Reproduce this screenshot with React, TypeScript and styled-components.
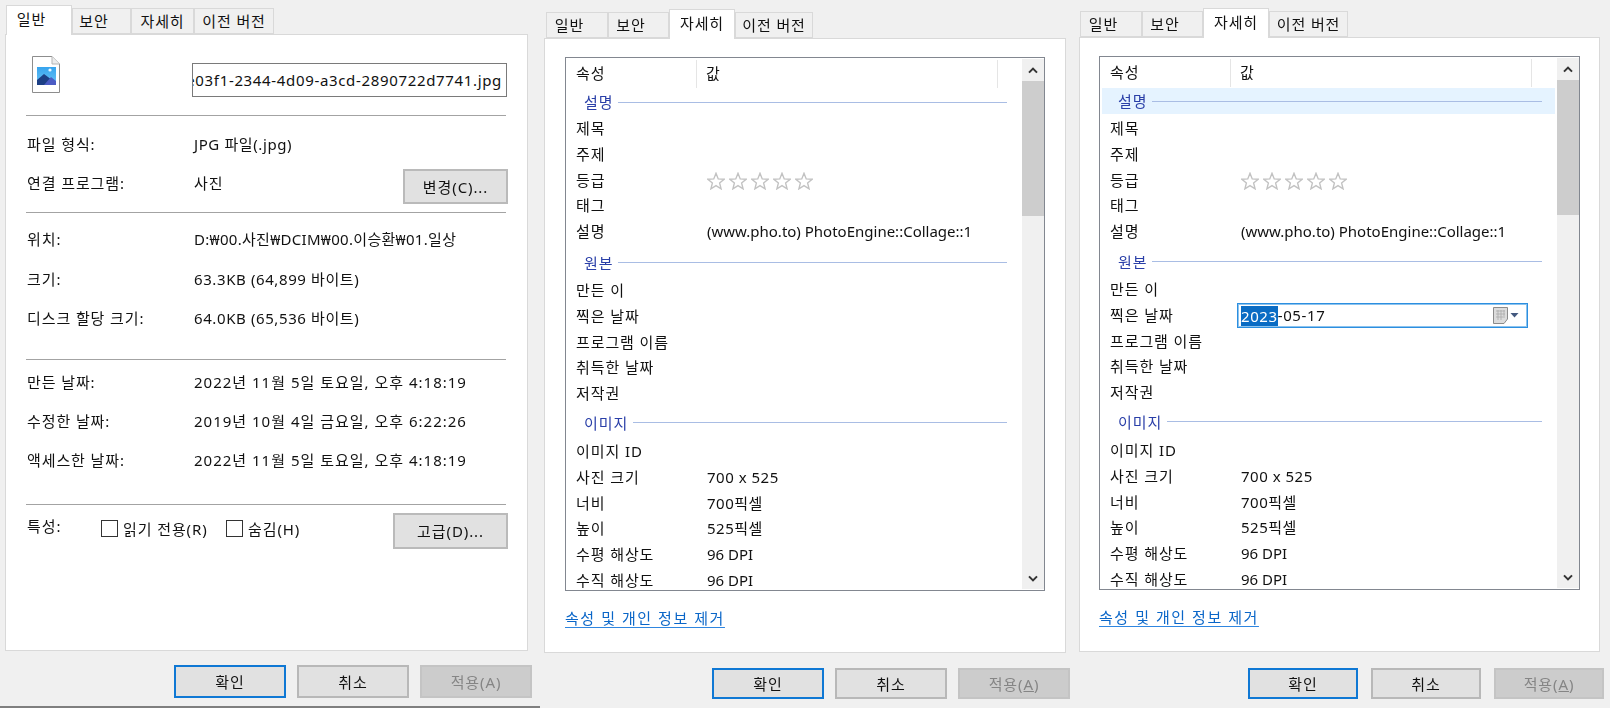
import React from "react";
import styled, { createGlobalStyle } from "styled-components";

const Global = createGlobalStyle`
  html, body { margin: 0; padding: 0; background: #f0f0f0; }
  body { width: 1610px; height: 708px; overflow: hidden; font-family: "Noto Sans", "Noto Sans CJK KR", sans-serif; font-size: 15px; letter-spacing: 0.9px; color: #111; }
  * { box-sizing: border-box; }
`;

const Page = styled.div`
  display: flex;
  width: 1610px;
  height: 708px;
  filter: blur(0.4px);
`;

const Dialog = styled.section<{ $w: number; $pl: number; $pt: number }>`
  width: ${(p) => p.$w}px;
  height: 708px;
  padding: ${(p) => p.$pt}px 0 0 ${(p) => p.$pl}px;
  flex: none;
`;

const TabRow = styled.div<{ $ml: number }>`
  display: flex;
  align-items: flex-end;
  height: 30px;
  margin: 0 0 -1px ${(p) => p.$ml}px;
  position: relative;
  z-index: 1;
`;

const Tab = styled.div<{ $w: number; $active?: boolean; $short?: boolean }>`
  width: ${(p) => p.$w}px;
  height: ${(p) => (p.$active ? 30 : 26)}px;
  margin-bottom: ${(p) => (p.$active ? 0 : 1)}px;
  background: ${(p) => (p.$active ? "#fff" : "#f0f0f0")};
  border: 1px solid #d9d9d9;
  border-bottom: ${(p) => (p.$active ? "none" : "1px solid #d9d9d9")};
  display: flex;
  align-items: center;
  justify-content: center;
  padding-bottom: ${(p) => (p.$active ? 3 : 0)}px;
  padding-right: ${(p) => (p.$short ? 15 : 0)}px;
  line-height: 18px;
  white-space: nowrap;
`;

const Panel = styled.div<{ $w: number; $h: number }>`
  width: ${(p) => p.$w}px;
  height: ${(p) => p.$h}px;
  background: #fff;
  border: 1px solid #d9d9d9;
`;

const GeneralBody = styled(Panel)`
  padding: 20px 19px 0 20px;
`;

const HeadRow = styled.div`
  display: flex;
  height: 42px;
`;

const IconSlot = styled.div`
  width: 166px;
  padding: 1px 0 0 6px;
  flex: none;
`;

const NameInput = styled.div`
  width: 315px;
  height: 34px;
  margin-top: 8px;
  border: 1px solid #7a7a7a;
  background: #fff;
  overflow: hidden;
  display: flex;
  justify-content: flex-end;
  align-items: center;
  padding-right: 4px;
  white-space: nowrap;
  letter-spacing: 0.66px;
`;

const Rule = styled.div<{ $mt: number }>`
  height: 1px;
  width: 480px;
  background: #a3a3a3;
  margin-top: ${(p) => p.$mt}px;
`;

const InfoRow = styled.div<{ $h: number; $mt?: number }>`
  display: flex;
  height: ${(p) => p.$h}px;
  margin-top: ${(p) => p.$mt ?? 0}px;
  line-height: ${(p) => p.$h}px;
`;

const InfoLabel = styled.div`
  width: 168px;
  padding-left: 1px;
  flex: none;
  white-space: nowrap;
`;

const InfoValue = styled.div<{ $ls?: number }>`
  flex: 1;
  white-space: nowrap;
  letter-spacing: ${(p) => p.$ls ?? 0.9}px;
`;

const ActionButton = styled.div<{ $w: number; $h: number }>`
  width: ${(p) => p.$w}px;
  height: ${(p) => p.$h}px;
  flex: none;
  background: #e1e1e1;
  border: 2px solid #bababa;
  display: flex;
  align-items: center;
  justify-content: center;
  line-height: 18px;
`;

const OpenWithRow = styled.div`
  display: flex;
  height: 35px;
  margin-top: 15px;
  line-height: 28px;
`;

const AttrRow = styled.div`
  display: flex;
  height: 36px;
  margin-top: 8px;
`;

const AttrLabel = styled.div`
  width: 75px;
  padding-left: 1px;
  flex: none;
  line-height: 26px;
`;

const Check = styled.span`
  width: 17px;
  height: 17px;
  flex: none;
  border: 1px solid #333;
  background: #fff;
  margin-right: 5px;
`;

const CheckItem = styled.label<{ $w: number }>`
  display: flex;
  align-items: center;
  width: ${(p) => p.$w}px;
  height: 17px;
  margin-top: 7px;
  flex: none;
  white-space: nowrap;
`;

const Footer = styled.div<{ $ml: number; $gap: number; $mt: number }>`
  display: flex;
  gap: ${(p) => p.$gap}px;
  margin: ${(p) => p.$mt}px 0 0 ${(p) => p.$ml}px;
`;

const FooterButton = styled.div<{ $w: number; $h: number; $kind?: "default" | "disabled" }>`
  width: ${(p) => p.$w}px;
  height: ${(p) => p.$h}px;
  display: flex;
  align-items: center;
  justify-content: center;
  line-height: 18px;
  background: ${(p) => (p.$kind === "disabled" ? "#cccccc" : "#e1e1e1")};
  color: ${(p) => (p.$kind === "disabled" ? "#858585" : "#111")};
  border: 2px solid
    ${(p) => (p.$kind === "default" ? "#0f78d4" : p.$kind === "disabled" ? "#c4c4c4" : "#b8b8b8")};
`;

const BottomLine = styled.div`
  width: 540px;
  height: 2px;
  margin: 8px 0 0 -5px;
  background: #7f7f7f;
`;

const DetailBody = styled(Panel)<{ $pl: number }>`
  padding: 18px 0 0 ${(p) => p.$pl}px;
`;

const ListBox = styled.div<{ $h: number; $w: number }>`
  width: ${(p) => p.$w}px;
  height: ${(p) => p.$h}px;
  border: 1px solid #828790;
  display: flex;
  background: #fff;
  overflow: hidden;
`;

const PropList = styled.div`
  flex: 1;
  min-width: 0;
  overflow: hidden;
`;

const HeaderRow = styled.div`
  display: flex;
  height: 31px;
  padding: 2px 0 1px 10px;
`;

const HeaderCell = styled.div<{ $w: number }>`
  width: ${(p) => p.$w}px;
  flex: none;
  border-right: 1px solid #e5e5e5;
  padding-left: ${(p) => (p.$w > 200 ? 9 : 0)}px;
  line-height: 26px;
`;

const Group = styled.div<{ $mt: number; $mb: number; $hover?: boolean }>`
  display: flex;
  align-items: center;
  height: 26px;
  margin: ${(p) => p.$mt}px 2px ${(p) => p.$mb}px 2px;
  padding: 0 13px 0 16px;
  background: ${(p) => (p.$hover ? "#e5f3ff" : "transparent")};
`;

const GroupLabel = styled.span`
  color: #2a3fa8;
  line-height: 26px;
  margin-right: 5px;
  white-space: nowrap;
`;

const GroupLine = styled.span`
  flex: 1;
  height: 1px;
  background: #a9bde4;
`;

const PropRow = styled.div`
  display: flex;
  height: 25.8px;
  line-height: 25.8px;
  padding-left: 10px;
`;

const PropName = styled.div`
  width: 131px;
  flex: none;
  white-space: nowrap;
`;

const PropValue = styled.div<{ $ls: number }>`
  flex: 1;
  display: flex;
  align-items: center;
  white-space: nowrap;
  letter-spacing: ${(p) => p.$ls}px;
`;

const Stars = styled.div`
  display: flex;
  gap: 4px;
  padding-top: 2px;
`;

const DateEdit = styled.div`
  width: 291px;
  height: 25px;
  margin-left: -4px;
  border: 1px solid #2c8fe0;
  background: #fff;
  display: flex;
  align-items: center;
  padding: 0 8px 0 3px;
  outline: 1px solid #8cc3ee;
  outline-offset: -2px;
  letter-spacing: 0.6px;
`;

const Selected = styled.span`
  background: #0a6cc4;
  color: #fff;
  line-height: 20px;
`;

const DateRest = styled.span`
  flex: 1;
`;

const ScrollBar = styled.div`
  width: 22px;
  flex: none;
  margin: 1px 0;
  background: #f0f0f0;
  display: flex;
  flex-direction: column;
  justify-content: space-between;
`;

const ScrollTop = styled.div`
  display: flex;
  flex-direction: column;
`;

const ScrollArrow = styled.div`
  height: 22px;
  display: flex;
  align-items: center;
  justify-content: center;
`;

const Thumb = styled.div`
  height: 135px;
  background: #cdcdcd;
`;

const RemoveLink = styled.a`
  display: inline-block;
  margin-top: 18px;
  color: #0a66c8;
  line-height: 18px;
  text-decoration: underline;
  text-decoration-color: #2f86e0;
  text-underline-offset: 3px;
  letter-spacing: 1.55px;
`;

const FileIcon = () => (
  <svg width="28" height="37" viewBox="0 0 28 37">
    <path d="M.5.5H20L27.5 8V36.5H.5Z" fill="#fff" stroke="#8d8d8d" />
    <path d="M20 .5V8H27.5" fill="#ececec" stroke="#b5b5b5" />
    <defs>
      <linearGradient id="sky" x1="0" y1="0" x2="0" y2="1">
        <stop offset="0" stopColor="#37a4ee" />
        <stop offset="1" stopColor="#6cc4f5" />
      </linearGradient>
    </defs>
    <rect x="5" y="11" width="19" height="18" fill="url(#sky)" />
    <circle cx="18" cy="14" r="1.6" fill="#e8f6ff" />
    <path d="M5 29V24L12 18L24 27V29Z" fill="#1c3f85" />
    <path d="M12 29L19 21L24 25V29Z" fill="#4b5cc4" />
  </svg>
);

const Star = () => (
  <svg width="18" height="18" viewBox="0 0 17 17">
    <path
      d="M8.5 1.2L10.6 6.5L16.2 6.8L11.9 10.4L13.3 15.9L8.5 12.9L3.7 15.9L5.1 10.4L.8 6.8L6.4 6.5Z"
      fill="#fff"
      stroke="#c2c2c2"
      strokeWidth="1.3"
    />
  </svg>
);

const Chevron = ({ up }: { up?: boolean }) => (
  <svg width="10" height="7" viewBox="0 0 10 7">
    <path
      d={up ? "M1 5.6L5 1.6L9 5.6" : "M1 1.4L5 5.4L9 1.4"}
      fill="none"
      stroke="#333"
      strokeWidth="2"
    />
  </svg>
);

const CalendarIcon = () => (
  <svg width="26" height="17" viewBox="0 0 26 17">
    <path d="M.5 .5H14.5V12L11 16.5H.5Z" fill="#dcdcdc" stroke="#8b8b8b" />
    <path d="M3 4H12M3 7H12M3 10H10M5 3V13M8 3V13M11 3V11" stroke="#a9a9a9" strokeWidth="0.8" />
    <path d="M17.5 6H25.5L21.5 10.5Z" fill="#43597f" />
  </svg>
);

const tabNames = ["일반", "보안", "자세히", "이전 버전"];

type Item =
  | { group: string; mt: number; mb: number; hover?: boolean }
  | { name: string; value?: string; ls?: number; stars?: boolean; date?: boolean };

const items = (editing: boolean): Item[] => [
  { group: "설명", mt: 0, mb: editing ? 2 : 1, hover: editing },
  { name: "제목" },
  { name: "주제" },
  { name: "등급", stars: true },
  { name: "태그" },
  { name: "설명", value: "(www.pho.to) PhotoEngine::Collage::1", ls: 0 },
  { group: "원본", mt: editing ? 4 : 5, mb: 2 },
  { name: "만든 이" },
  { name: "찍은 날짜", date: editing },
  { name: "프로그램 이름" },
  { name: "취득한 날짜" },
  { name: "저작권" },
  { group: "이미지", mt: 3, mb: 3 },
  { name: "이미지 ID" },
  { name: "사진 크기", value: "700 x 525", ls: 0.5 },
  { name: "너비", value: "700픽셀", ls: 0.5 },
  { name: "높이", value: "525픽셀", ls: 0.5 },
  { name: "수평 해상도", value: "96 DPI", ls: 0 },
  { name: "수직 해상도", value: "96 DPI", ls: 0 },
];

const Tabs = ({ widths, ml, active }: { widths: number[]; ml: number; active: number }) => (
  <TabRow $ml={ml}>
    {tabNames.map((t, i) => (
      <Tab key={t} $w={widths[i]} $active={i === active} $short={i < 2}>
        {t}
      </Tab>
    ))}
  </TabRow>
);

const Buttons = ({
  ml, mt, w, h, gap, mnemonic,
}: { ml: number; mt: number; w: number; h: number; gap: number; mnemonic?: boolean }) => (
  <Footer $ml={ml} $mt={mt} $gap={gap}>
    <FooterButton $w={w} $h={h} $kind="default">확인</FooterButton>
    <FooterButton $w={w} $h={h}>취소</FooterButton>
    <FooterButton $w={w} $h={h} $kind="disabled">
      {mnemonic ? <span>적용(<u>A</u>)</span> : "적용(A)"}
    </FooterButton>
  </Footer>
);

const Detail = ({
  dw, pl, pt, ml, panelW, panelH, bodyPl, listW, listH, tabs, footerMl, footerW, footerGap, footerMt, editing,
}: {
  dw: number; pl: number; pt: number; ml: number; panelW: number; panelH: number; bodyPl: number;
  listW: number; listH: number; tabs: number[]; footerMl: number; footerW: number; footerGap: number;
  footerMt: number; editing: boolean;
}) => (
  <Dialog $w={dw} $pl={pl} $pt={pt}>
    <Tabs widths={tabs} ml={ml} active={2} />
    <DetailBody $w={panelW} $h={panelH} $pl={bodyPl}>
      <ListBox $w={listW} $h={listH}>
        <PropList>
          <HeaderRow>
            <HeaderCell $w={121}>속성</HeaderCell>
            <HeaderCell $w={301}>값</HeaderCell>
          </HeaderRow>
          {items(editing).map((it, i) =>
            "group" in it ? (
              <Group key={i} $mt={it.mt} $mb={it.mb} $hover={it.hover}>
                <GroupLabel>{it.group}</GroupLabel>
                <GroupLine />
              </Group>
            ) : (
              <PropRow key={i}>
                <PropName>{it.name}</PropName>
                <PropValue $ls={it.ls ?? 0}>
                  {it.value}
                  {it.stars && (
                    <Stars>
                      {[0, 1, 2, 3, 4].map((s) => <Star key={s} />)}
                    </Stars>
                  )}
                  {it.date && (
                    <DateEdit>
                      <Selected>2023</Selected>
                      <DateRest>-05-17</DateRest>
                      <CalendarIcon />
                    </DateEdit>
                  )}
                </PropValue>
              </PropRow>
            )
          )}
        </PropList>
        <ScrollBar>
          <ScrollTop>
            <ScrollArrow><Chevron up /></ScrollArrow>
            <Thumb />
          </ScrollTop>
          <ScrollArrow><Chevron /></ScrollArrow>
        </ScrollBar>
      </ListBox>
      <RemoveLink>속성 및 개인 정보 제거</RemoveLink>
    </DetailBody>
    <Buttons ml={footerMl} mt={footerMt} w={footerW} h={31} gap={footerGap} mnemonic />
  </Dialog>
);

export default function App() {
  return (
    <>
      <Global />
      <Page>
        <Dialog $w={540} $pl={5} $pt={5}>
          <Tabs widths={[66, 59, 63, 80]} ml={1} active={0} />
          <GeneralBody $w={523} $h={617}>
            <HeadRow>
              <IconSlot><FileIcon /></IconSlot>
              <NameInput>e03f1-2344-4d09-a3cd-2890722d7741.jpg</NameInput>
            </HeadRow>
            <Rule $mt={18} />
            <InfoRow $h={20} $mt={18}>
              <InfoLabel>파일 형식:</InfoLabel>
              <InfoValue $ls={0.6}>JPG 파일(.jpg)</InfoValue>
            </InfoRow>
            <OpenWithRow>
              <InfoLabel>연결 프로그램:</InfoLabel>
              <InfoValue>사진</InfoValue>
              <ActionButton $w={105} $h={35}>변경(C)...</ActionButton>
            </OpenWithRow>
            <Rule $mt={8} />
            <InfoRow $h={39.5} $mt={7}>
              <InfoLabel>위치:</InfoLabel>
              <InfoValue $ls={0.3}>D:₩00.사진₩DCIM₩00.이승환₩01.일상</InfoValue>
            </InfoRow>
            <InfoRow $h={39.5}>
              <InfoLabel>크기:</InfoLabel>
              <InfoValue $ls={0.6}>63.3KB (64,899 바이트)</InfoValue>
            </InfoRow>
            <InfoRow $h={39.5}>
              <InfoLabel>디스크 할당 크기:</InfoLabel>
              <InfoValue $ls={0.6}>64.0KB (65,536 바이트)</InfoValue>
            </InfoRow>
            <Rule $mt={20} />
            <InfoRow $h={39} $mt={3}>
              <InfoLabel>만든 날짜:</InfoLabel>
              <InfoValue $ls={1}>2022년 11월 5일 토요일, 오후 4:18:19</InfoValue>
            </InfoRow>
            <InfoRow $h={39}>
              <InfoLabel>수정한 날짜:</InfoLabel>
              <InfoValue $ls={1}>2019년 10월 4일 금요일, 오후 6:22:26</InfoValue>
            </InfoRow>
            <InfoRow $h={39}>
              <InfoLabel>액세스한 날짜:</InfoLabel>
              <InfoValue $ls={1}>2022년 11월 5일 토요일, 오후 4:18:19</InfoValue>
            </InfoRow>
            <Rule $mt={24} />
            <AttrRow>
              <AttrLabel>특성:</AttrLabel>
              <CheckItem $w={125}><Check />읽기 전용(R)</CheckItem>
              <CheckItem $w={167}><Check />숨김(H)</CheckItem>
              <ActionButton $w={115} $h={36}>고급(D)...</ActionButton>
            </AttrRow>
          </GeneralBody>
          <Buttons ml={169} mt={14} w={112} h={33} gap={11} />
          <BottomLine />
        </Dialog>
        <Detail dw={536} pl={4} pt={9} ml={2} panelW={522} panelH={615} bodyPl={20} listW={480} listH={534}
          tabs={[62, 61, 66, 78]} footerMl={168} footerW={112} footerGap={11} footerMt={15} editing={false} />
        <Detail dw={534} pl={3} pt={8} ml={1} panelW={521} panelH={615} bodyPl={19} listW={481} listH={534}
          tabs={[62, 61, 66, 79]} footerMl={169} footerW={110} footerGap={13} footerMt={16} editing />
      </Page>
    </>
  );
}
